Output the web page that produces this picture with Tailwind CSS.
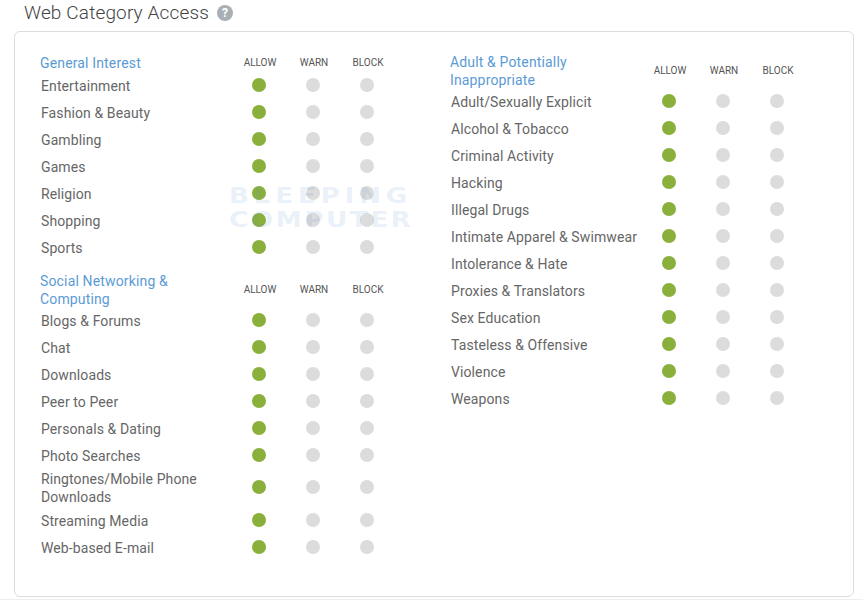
<!DOCTYPE html>
<html>
<head>
<meta charset="utf-8">
<script src="https://cdn.jsdelivr.net/npm/@tailwindcss/browser@4"></script>
</head>
<body class="bg-white font-['Roboto',sans-serif] overflow-hidden">
<div class="relative w-[863px] h-[600px] border-b border-[#eee]">
  <div class="flex items-center h-[31px] pl-6 pb-[6px]">
    <h1 class="text-[19px] font-light text-[#444] leading-none tracking-[0.15px]">Web Category Access</h1>
    <span class="ml-2 w-4 h-4 rounded-full bg-[#a9b0b5] text-white text-[12px] font-bold flex items-center justify-center">?</span>
  </div>
  <div class="ml-3.5 w-[840px] h-[566px] border border-[#ddd] rounded-md flex pl-[26px] pt-[22px]">
    <div id="col-left" class="w-[410px]"></div>
    <div id="col-right" class="w-[380px] -mt-px"></div>
  </div>
  <div class="absolute left-[229px] top-[184px] origin-left scale-x-[1.25] font-['DejaVu_Sans',sans-serif] text-[21px] leading-[24px] font-bold text-[#5b8fd0]/15 pointer-events-none">
    <div class="tracking-[3.8px]">BLEEPING</div>
    <div class="tracking-[2px]">COMPUTER</div>
  </div>
</div>
<script>
const COLS = {
  left: [
    { title: 'General Interest', h: 'h-[18px]', items: ['Entertainment', 'Fashion & Beauty', 'Gambling', 'Games', 'Religion', 'Shopping', 'Sports'] },
    { title: 'Social Networking & Computing', h: 'h-[35px] mt-3', items: ['Blogs & Forums', 'Chat', 'Downloads', 'Peer to Peer', 'Personals & Dating', 'Photo Searches', 'Ringtones/Mobile Phone Downloads', 'Streaming Media', 'Web-based E-mail'] },
  ],
  right: [
    { title: 'Adult & Potentially Inappropriate', h: 'h-[35px]', items: ['Adult/Sexually Explicit', 'Alcohol & Tobacco', 'Criminal Activity', 'Hacking', 'Illegal Drugs', 'Intimate Apparel & Swimwear', 'Intolerance & Hate', 'Proxies & Translators', 'Sex Education', 'Tasteless & Offensive', 'Violence', 'Weapons'] },
  ],
};

function row(name) {
  const tall = name.length > 30;
  return `
    <div class="flex items-center ${tall ? 'h-[36px] mb-[2px]' : 'h-[26px] mb-px'}">
      <div class="w-[191px] shrink-0 text-[14px] leading-[18px] text-[#666] tracking-[0.1px] ${tall ? 'pt-[2px]' : 'pt-px'}">${name.replace(/&/g, '&amp;')}</div>
      <div class="w-[54px] flex justify-center"><span class="w-3.5 h-3.5 rounded-full bg-[#8ab03c]"></span></div>
      <div class="w-[54px] flex justify-center"><span class="w-3.5 h-3.5 rounded-full bg-[#dcdcdc]"></span></div>
      <div class="w-[54px] flex justify-center"><span class="w-3.5 h-3.5 rounded-full bg-[#dcdcdc]"></span></div>
    </div>`;
}

function section(s) {
  return `
    <div class="flex items-center ${s.h}">
      <div class="w-[193px] shrink-0 -ml-px text-[14px] leading-[18px] text-[#5b9bd5] tracking-[0.15px]">${s.title.replace(/&/g, '&amp;')}</div>
      <div class="w-[54px] text-center text-[10px] text-[#555] -mt-px">ALLOW</div>
      <div class="w-[54px] text-center text-[10px] text-[#555] -mt-px">WARN</div>
      <div class="w-[54px] text-center text-[10px] text-[#555] -mt-px">BLOCK</div>
    </div>
    ${s.items.map(row).join('')}`;
}

document.getElementById('col-left').innerHTML = COLS.left.map(section).join('');
document.getElementById('col-right').innerHTML = COLS.right.map(section).join('');
</script>
</body>
</html>
